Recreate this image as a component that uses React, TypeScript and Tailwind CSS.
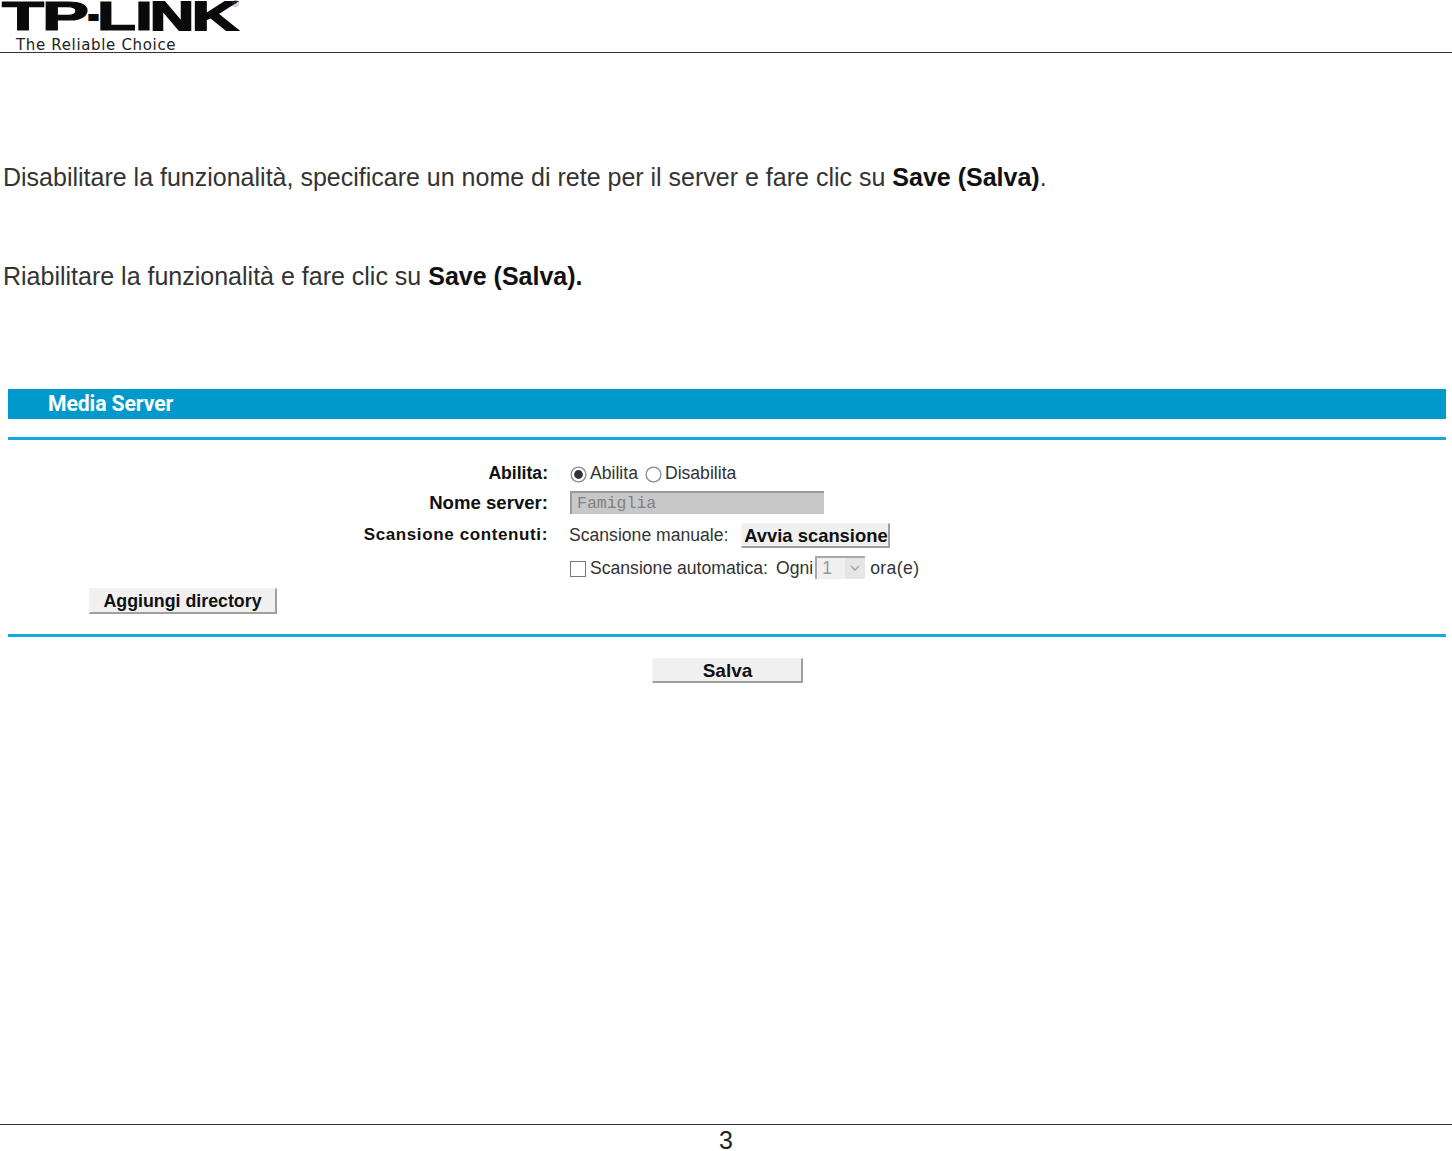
const arial = "font-['Liberation_Sans',Arial,sans-serif]";

function Btn({ children, className }: { children: string; className: string }) {
  return (
    <div
      className={`flex items-center justify-center pt-[2px] bg-[#f0f0f0] border-t border-l border-t-[#f4f4f4] border-l-[#f4f4f4] border-r-2 border-b-2 border-r-[#a0a0a0] border-b-[#a0a0a0] font-bold text-[#111] whitespace-nowrap ${className}`}
    >
      {children}
    </div>
  );
}

function Radio({ on }: { on?: boolean }) {
  return (
    <svg width="17" height="17" viewBox="0 0 17 17" className="shrink-0 mt-[2px]">
      <circle cx="8.5" cy="8.5" r="7.4" fill="#fff" stroke="#8a8a8a" strokeWidth="1.3" />
      {on && <circle cx="8.5" cy="8.5" r="4.4" fill="#333" />}
    </svg>
  );
}

const logoLetters: { c: string; x: number; w: number; y?: number; s?: number }[] = [
  { c: "T", x: 2, w: 42 },
  { c: "P", x: 42, w: 47 },
  { c: "-", x: 88, w: 11, y: 28, s: 2.2 },
  { c: "L", x: 97, w: 39 },
  { c: "I", x: 135, w: 18 },
  { c: "N", x: 150, w: 44, s: 1.8 },
  { c: "K", x: 192, w: 46, s: 1.8 },
];

export default function App() {
  return (
    <div className={`h-[1151px] w-[1452px] bg-white flex flex-col overflow-hidden ${arial}`}>
      <header className="h-[53px] border-b border-[#333] shrink-0 relative">
        <svg width="245" height="36" viewBox="0 0 245 36" className="block">
          {logoLetters.map((l) => (
            <text
              key={l.c}
              x={l.x}
              y={l.y ?? 30}
              textLength={l.w}
              lengthAdjust="spacingAndGlyphs"
              fontFamily="'Liberation Sans', Arial, sans-serif"
              fontWeight="700"
              fontSize="40"
              fill="#0a0a0a"
              stroke="#0a0a0a"
              strokeWidth={l.s ?? 1.2}
            >
              {l.c}
            </text>
          ))}
          <text x="232" y="7" fontSize="9" fill="#444" fontFamily="'Liberation Sans', Arial, sans-serif">
            ®
          </text>
        </svg>
        <div className="absolute left-[16px] top-[37px] text-[15px] leading-[16px] tracking-[0.66px] text-[#222] font-['DejaVu_Sans',sans-serif] whitespace-nowrap">
          The Reliable Choice
        </div>
      </header>

      <main className="flex-1 flex flex-col">
        <p className="pl-[3px] mt-[108px] text-[25px] leading-[32px] text-[#333] whitespace-nowrap">
          Disabilitare la funzionalità, specificare un nome di rete per il server e fare clic su{" "}
          <b className="text-[#111]">Save (Salva)</b>.
        </p>
        <p className="pl-[3px] mt-[67px] text-[25px] leading-[32px] text-[#333] whitespace-nowrap">
          Riabilitare la funzionalità e fare clic su <b className="text-[#111]">Save (Salva).</b>
        </p>

        <section className="ml-[8px] w-[1438px] mt-[97px]">
          <div className="h-[30px] bg-[#0099cc] pl-[40px] flex items-center text-white font-bold text-[21.2px] font-['Roboto',sans-serif] tracking-[-0.1px]">
            Media Server
          </div>
          <div className="h-[3px] bg-[#12a8e0] mt-[18px]" />

          <div className="h-[194px] text-[17.6px] text-[#333]">
            <div className="flex pt-[21px] h-[51px]">
              <div className="w-[540px] text-right font-bold text-[#111] text-[17.6px] leading-[24px]">Abilita:</div>
              <div className="ml-[22px] flex items-center h-[24px]">
                <Radio on />
                <span className="ml-[3px]">Abilita</span>
                <span className="ml-[7px]"><Radio /></span>
                <span className="ml-[3px]">Disabilita</span>
              </div>
            </div>
            <div className="flex h-[31px] items-start">
              <div className="w-[540px] text-right font-bold text-[#111] text-[18.6px] leading-[24px]">Nome server:</div>
              <div className="ml-[22px] w-[254px] h-[23px] pt-[2px] bg-[#c8c8c8] border-t-2 border-l-2 border-t-[#9a9a9a] border-l-[#9a9a9a] pl-[5px] flex items-center font-['Liberation_Mono',monospace] text-[16.5px] text-[#808080]">
                Famiglia
              </div>
            </div>
            <div className="flex h-[34px] items-start">
              <div className="w-[540px] mt-[1px] text-right font-bold text-[#111] text-[17px] leading-[24px] tracking-[0.62px]">Scansione contenuti:</div>
              <div className="ml-[21px] flex items-start">
                <span className="leading-[24px] mt-[1px]">Scansione manuale:</span>
                <Btn className="ml-[13px] mt-[1px] w-[149px] h-[25px] pl-[1px] text-[18.4px]">Avvia scansione</Btn>
              </div>
            </div>
            <div className="flex h-[32px] items-start pl-[562px]">
              <span className="w-[16px] h-[16px] border border-[#777] bg-white mt-[5px] shrink-0" />
              <span className="ml-[4px] mt-[1px] leading-[22px]">Scansione automatica:</span>
              <span className="ml-[8px] mt-[1px] leading-[22px]">Ogni</span>
              <div className="ml-[2px] w-[50px] h-[23px] border-l-2 border-t-2 border-[#a8a8a8] bg-[#f0f0f0] flex items-center justify-between pl-[5px] text-[#999]">
                <span>1</span>
                <span className="w-[20px] h-[21px] bg-[#e6e6e6] flex items-center justify-center">
                  <svg width="10" height="7" viewBox="0 0 10 7" fill="none" stroke="#aaa" strokeWidth="1.6">
                    <path d="M1 1l4 4 4-4" />
                  </svg>
                </span>
              </div>
              <span className="ml-[5px] mt-[1px] leading-[22px] tracking-[0.4px]">ora(e)</span>
            </div>
            <div className="pl-[81px]">
              <Btn className="w-[188px] h-[26px] text-[17.8px]">Aggiungi directory</Btn>
            </div>
          </div>

          <div className="h-[3px] bg-[#12a8e0]" />
          <div className="pl-[644px] mt-[21px]">
            <Btn className="w-[151px] h-[25px] pl-[1px] text-[19px]">Salva</Btn>
          </div>
        </section>
      </main>

      <footer className="h-[27px] border-t border-[#333] shrink-0 flex justify-center items-center pt-[5px] text-[25px] leading-[27px] text-[#222]">
        3
      </footer>
    </div>
  );
}
